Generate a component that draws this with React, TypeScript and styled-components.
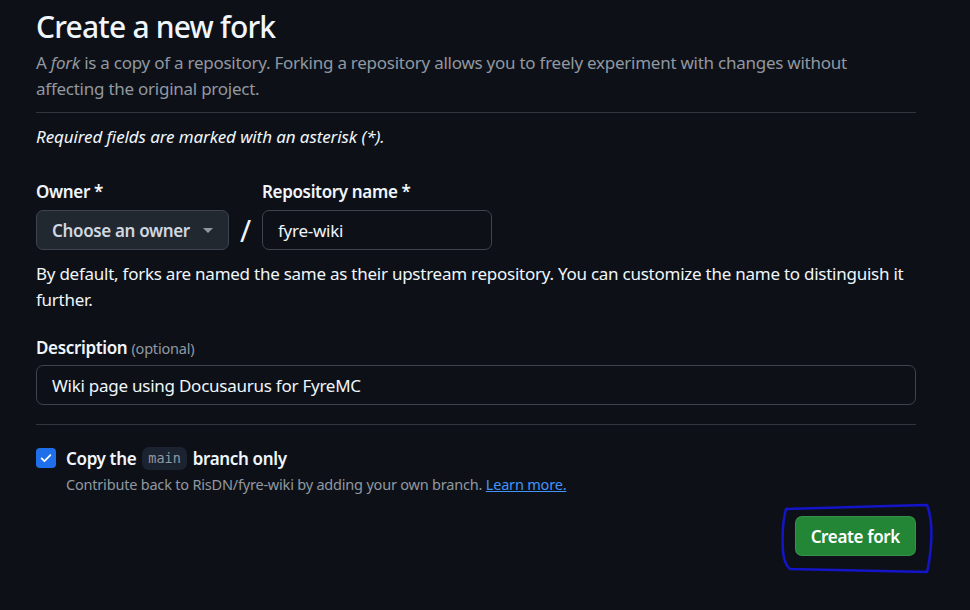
import React from "react";
import styled, { createGlobalStyle } from "styled-components";

const GlobalStyle = createGlobalStyle`
  html, body {
    margin: 0;
    padding: 0;
    background: #0d1117;
  }
  body {
    font-family: "Noto Sans", "Liberation Sans", sans-serif;
    color: #f0f6fc;
    letter-spacing: -0.25px;
  }
`;

const Page = styled.div`
  position: relative;
  width: 970px;
  height: 610px;
  overflow: hidden;
  background: #0d1117;
`;

const Container = styled.form`
  width: 880px;
  margin-left: 36px;
  padding-top: 8px;
  display: flex;
  flex-direction: column;
`;

const Subhead = styled.div`
  padding-bottom: 10px;
  border-bottom: 1px solid #30363d;
`;

const Title = styled.h1`
  margin: 0;
  font-size: 30px;
  line-height: 38px;
  font-weight: 500;
  letter-spacing: -0.8px;
  color: #f0f6fc;
`;

const Lead = styled.p`
  margin: 4px 0 0;
  font-size: 17px;
  line-height: 26px;
  color: #9198a1;
`;

const Required = styled.p`
  margin: 11px 0 0;
  font-size: 17px;
  line-height: 26px;
  font-style: italic;
  letter-spacing: -0.1px;
  color: #f0f6fc;
`;

const FieldRow = styled.div`
  margin-top: 29px;
  display: flex;
  align-items: flex-end;
`;

const Field = styled.div`
  display: flex;
  flex-direction: column;
  gap: 5px;
`;

const Label = styled.label`
  font-size: 17px;
  line-height: 26px;
  font-weight: 600;
  letter-spacing: -0.35px;
  color: #f0f6fc;
`;

const Muted = styled.span`
  font-size: 14.5px;
  font-weight: 400;
  letter-spacing: -0.2px;
  color: #9198a1;
`;

const Select = styled.button`
  width: 193px;
  height: 40px;
  box-sizing: border-box;
  padding: 0 15px 0 15px;
  display: flex;
  align-items: center;
  justify-content: space-between;
  background: #212830;
  border: 1px solid #3d444d;
  border-radius: 7px;
  color: #d1d7e0;
  font-family: inherit;
  font-size: 17px;
  font-weight: 600;
  letter-spacing: -0.35px;
`;

const Caret = styled.span`
  width: 0;
  height: 0;
  border-left: 5px solid transparent;
  border-right: 5px solid transparent;
  border-top: 5px solid #9198a1;
`;

const Slash = styled.span`
  width: 33px;
  height: 40px;
  display: flex;
  align-items: center;
  justify-content: center;
  font-size: 30px;
  color: #f0f6fc;
`;

const Input = styled.div<{ $width: number }>`
  width: ${(p) => p.$width}px;
  height: 40px;
  box-sizing: border-box;
  padding: 0 15px;
  display: flex;
  align-items: center;
  background: #0d1117;
  border: 1px solid #3d444d;
  border-radius: 7px;
  color: #f0f6fc;
  font-size: 17px;
`;

const Note = styled.p`
  margin: 11px 0 0;
  font-size: 17px;
  line-height: 26px;
  color: #f0f6fc;
`;

const DescField = styled(Field)`
  margin-top: 22px;
  gap: 4px;
`;

const Divider = styled.hr`
  margin: 19px 0 0;
  border: 0;
  border-top: 1px solid #30363d;
`;

const CheckRow = styled.div`
  margin-top: 20px;
  display: flex;
  align-items: center;
  gap: 10px;
  height: 26px;
`;

const Box = styled.span`
  width: 20px;
  height: 20px;
  border-radius: 4px;
  background: #1f6feb;
  display: flex;
  align-items: center;
  justify-content: center;
`;

const CheckLabel = styled.span`
  font-size: 17px;
  font-weight: 600;
  letter-spacing: -0.35px;
  color: #f0f6fc;
  display: flex;
  align-items: center;
  gap: 6px;
`;

const Code = styled.code`
  font-family: "DejaVu Sans Mono", "Liberation Mono", monospace;
  font-size: 13.5px;
  font-weight: 400;
  letter-spacing: 0;
  color: #9198a1;
  background: #1c2330;
  border-radius: 7px;
  padding: 3px 6px;
  line-height: 17px;
`;

const Hint = styled.p`
  margin: 2px 0 0 30px;
  font-size: 14.5px;
  line-height: 22px;
  letter-spacing: -0.2px;
  color: #9198a1;
`;

const Link = styled.a`
  color: #4493f8;
  text-decoration: underline;
`;

const Actions = styled.div`
  margin-top: 21px;
  display: flex;
  justify-content: flex-end;
`;

const PrimaryButton = styled.button`
  height: 40px;
  padding: 0 15px;
  background: #238636;
  border: 1px solid rgba(240, 246, 252, 0.1);
  border-radius: 7px;
  color: #ffffff;
  font-family: inherit;
  font-size: 17px;
  font-weight: 600;
  letter-spacing: -0.35px;
`;

const Scribble = styled.svg`
  position: absolute;
  left: 0;
  top: 0;
  pointer-events: none;
`;

export default function App() {
  return (
    <Page>
      <GlobalStyle />
      <Container onSubmit={(e) => e.preventDefault()}>
        <Subhead>
          <Title>Create a new fork</Title>
          <Lead>
            A <em>fork</em> is a copy of a repository. Forking a repository allows you to freely
            experiment with changes without affecting the original project.
          </Lead>
        </Subhead>

        <Required>Required fields are marked with an asterisk (*).</Required>

        <FieldRow>
          <Field>
            <Label>Owner *</Label>
            <Select type="button">
              Choose an owner
              <Caret />
            </Select>
          </Field>
          <Slash>/</Slash>
          <Field>
            <Label>Repository name *</Label>
            <Input $width={230}>fyre-wiki</Input>
          </Field>
        </FieldRow>

        <Note>
          By default, forks are named the same as their upstream repository. You can customize the
          name to distinguish it further.
        </Note>

        <DescField>
          <Label>
            Description <Muted>(optional)</Muted>
          </Label>
          <Input $width={880}>Wiki page using Docusaurus for FyreMC</Input>
        </DescField>

        <Divider />

        <CheckRow>
          <Box>
            <svg width="14" height="14" viewBox="0 0 16 16" fill="none">
              <path d="M3 8.5l3.2 3.2L13 4.8" stroke="#fff" strokeWidth="2" strokeLinecap="round" strokeLinejoin="round" />
            </svg>
          </Box>
          <CheckLabel>
            Copy the <Code>main</Code> branch only
          </CheckLabel>
        </CheckRow>
        <Hint>
          Contribute back to RisDN/fyre-wiki by adding your own branch. <Link href="#">Learn more.</Link>
        </Hint>

        <Actions>
          <PrimaryButton type="submit">Create fork</PrimaryButton>
        </Actions>
      </Container>

      <Scribble width="970" height="610">
        <path
          d="M786 509 C830 508 880 506 927 505 C931 515 932 530 931 545 C930 556 929 565 927 572 C880 571 835 570 790 569 C786 566 784 560 783 552 C782 535 783 520 786 509 Z"
          fill="none"
          stroke="#1414c8"
          strokeWidth="2.5"
          strokeLinejoin="round"
        />
      </Scribble>
    </Page>
  );
}
